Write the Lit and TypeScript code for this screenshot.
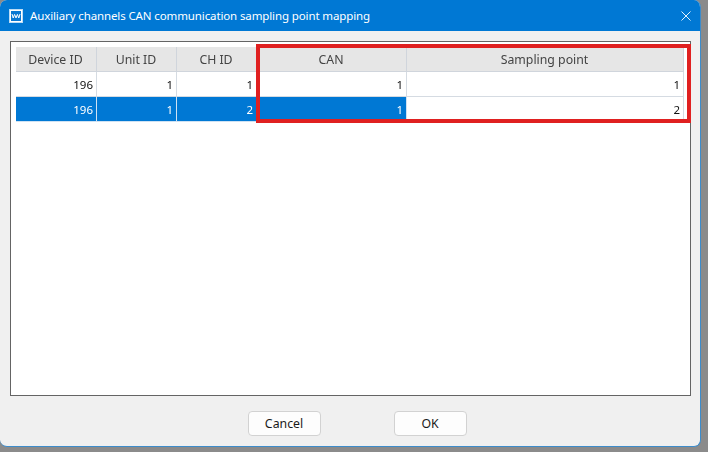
import { LitElement, html, css } from "lit";
import { customElement } from "lit/decorators.js";

const COLS = ["Device ID", "Unit ID", "CH ID", "CAN", "Sampling point"];
const ROWS = [
  { vals: [196, 1, 1, 1, 1], sel: false },
  { vals: [196, 1, 2, 1, 2], sel: true },
];

@customElement("app-root")
export class AppRoot extends LitElement {
  static styles = css`
    :host {
      display: block;
      width: 708px;
      height: 452px;
      overflow: hidden;
      background: #8b8b8b;
      font-family: "Noto Sans", "Noto Sans CJK SC", sans-serif;
    }
    .win {
      width: 701px;
      height: 447px;
      box-sizing: border-box;
      background: #f0f0f0;
      border-right: 1px solid #3d8ccb;
      border-bottom: 1px solid #3d8ccb;
      border-radius: 7px;
      overflow: hidden;
      display: flex;
      flex-direction: column;
    }
    .title {
      height: 31px;
      flex: none;
      background: #0078d4;
      color: #fff;
      display: flex;
      align-items: center;
      padding: 0 9px 0 9px;
      gap: 7px;
      font-size: 11.5px;
      letter-spacing: -0.12px;
    }
    .title span { flex: 1; white-space: nowrap; }
    .title svg { display: block; flex: none; }
    .body {
      flex: 1;
      display: flex;
      flex-direction: column;
      padding: 10px 9px 0 10px;
      min-height: 0;
    }
    .frame {
      position: relative;
      height: 355px;
      flex: none;
      box-sizing: border-box;
      border: 1px solid #646464;
      background: #fff;
      padding: 5px;
    }
    .grid {
      display: grid;
      grid-template-columns: 81px 80px 80px 150px 277px;
      grid-auto-rows: 25px;
      will-change: transform;
    }
    .h, .c {
      box-sizing: border-box;
      display: flex;
      align-items: center;
      border-right: 1px solid #d5dbe2;
      border-bottom: 1px solid #d5dbe2;
      font-size: 11.5px;
    }
    .h {
      justify-content: center;
      background: #e6e6e6;
      color: #444;
      font-size: 12.3px;
      padding-right: 1px;
      border-right-color: #d0d5dc;
      border-bottom-color: #d0d5dc;
    }
    .c {
      justify-content: flex-end;
      padding-right: 3px;
      color: #111;
      background: #fff;
    }
    .c.sel {
      background: #0078d4;
      color: #fff;
      border-color: #cfe2f3;
    }
    .mark {
      position: absolute;
      left: 245px;
      top: 2px;
      width: 435px;
      height: 79px;
      box-sizing: border-box;
      border: 4px solid #e02020;
      pointer-events: none;
    }
    .foot {
      flex: 1;
      display: flex;
      justify-content: center;
      gap: 73px;
      padding-top: 15px;
      padding-left: 13px;
    }
    button {
      width: 73px;
      height: 25px;
      box-sizing: border-box;
      border: 1px solid #d2d2d2;
      border-radius: 4px;
      background: #fdfdfd;
      color: #1a1a1a;
      font: inherit;
      font-size: 12.3px;
      padding: 0;
    }
  `;

  render() {
    return html`
      <div class="win">
        <div class="title">
          <svg width="14" height="14" viewBox="0 0 14 14">
            <rect width="14" height="14" fill="#bcdcf5" />
            <rect x="1.5" y="1.5" width="11" height="11" fill="#0a78d2" stroke="#fff" stroke-width="1" />
            <path d="M3 5l1.2 4 1.4-3.6 1.4 3.6 1.4-3.6 1.4 3.6 1.2-4" fill="none" stroke="#fff" stroke-width="1" />
          </svg>
          <span>Auxiliary channels CAN communication sampling point mapping</span>
          <svg width="10" height="10" viewBox="0 0 10 10">
            <path d="M.5.5l9 9M9.5.5l-9 9" stroke="#e6f2fb" stroke-width="1" fill="none" />
          </svg>
        </div>
        <div class="body">
          <div class="frame">
            <div class="grid">
              ${COLS.map((c) => html`<div class="h">${c}</div>`)}
              ${ROWS.map((r) =>
                r.vals.map(
                  (v, i) =>
                    html`<div class="c ${r.sel && i < 4 ? "sel" : ""}">${v}</div>`
                )
              )}
            </div>
            <div class="mark"></div>
          </div>
          <div class="foot">
            <button>Cancel</button>
            <button>OK</button>
          </div>
        </div>
      </div>
    `;
  }
}
